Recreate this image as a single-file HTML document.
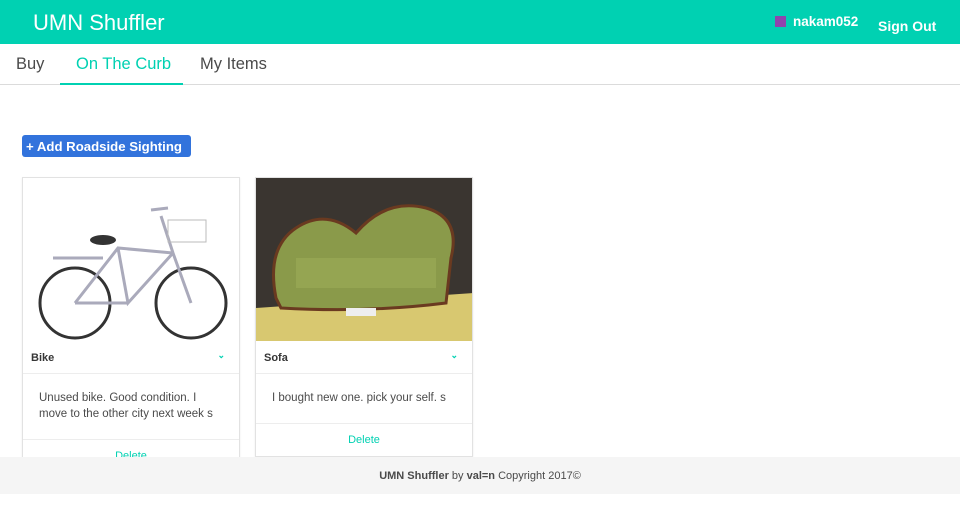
<!DOCTYPE html>
<html><head><meta charset="utf-8"><style>
*{box-sizing:border-box;margin:0;padding:0}
body{width:960px;height:518px;overflow:hidden;background:#fff;font-family:"Liberation Sans",sans-serif;color:#4a4a4a;position:relative}
.hdr{position:absolute;left:0;top:0;width:960px;height:44px;background:#00d1b2;color:#fff}
.logo{position:absolute;left:33px;top:10px;font-size:22px}
.user{position:absolute;left:775px;top:14px;font-size:13.5px;font-weight:bold}
.user i{display:inline-block;width:11px;height:11px;background:#8e44ad;margin-right:7px;vertical-align:-1px}
.so{position:absolute;left:878px;top:18px;font-size:14px;font-weight:bold}
.tabs{position:absolute;top:44px;left:0;width:960px;height:41px;border-bottom:1px solid #dbdbdb}
.tab{position:absolute;top:11px;font-size:16.5px;color:#4a4a4a}
.act{color:#00d1b2}
.ul{position:absolute;left:60px;top:83px;width:123px;height:2px;background:#00d1b2}
.btn{position:absolute;left:22px;top:135px;width:169px;height:22px;background:#3273dc;color:#fff;font-size:13.2px;font-weight:bold;border-radius:3px;padding:4px 0 0 4px;white-space:nowrap;overflow:hidden}
.card{position:absolute;top:177px;width:218px;background:#fff;border:1px solid #e2e2e2;box-shadow:0 1px 2px rgba(0,0,0,.08)}
.img{height:163px;overflow:hidden}
.ttl{height:33px;border-bottom:1px solid #ededed;font-size:11px;font-weight:bold;color:#363636;padding:11px 8px;position:relative}
.ttl span{position:absolute;right:14px;top:9px;color:#00d1b2;font-size:9px}
.desc{font-size:11.5px;line-height:16px;padding:16px 16px 17px;border-bottom:1px solid #ededed}
.del{text-align:center;color:#00d1b2;font-size:11px;padding:10px 0}
.foot{position:absolute;left:0;top:457px;width:960px;height:37px;background:#f5f5f5;text-align:center;font-size:11px;padding-top:13px;color:#4a4a4a}
</style></head><body>
<div class="hdr"><div class="logo">UMN Shuffler</div><div class="user"><i></i>nakam052</div><div class="so">Sign Out</div></div>
<div class="tabs"><div class="tab" style="left:16px">Buy</div><div class="tab act" style="left:76px">On The Curb</div><div class="tab" style="left:200px">My Items</div></div>
<div class="ul"></div>
<div class="btn">+ Add Roadside Sighting</div>
<div class="card" style="left:22px;height:290px">
<div class="img"><svg width="218" height="163"><rect width="218" height="163" fill="#fff"/><g fill="none" stroke="#333" stroke-width="3"><circle cx="52" cy="125" r="35"/><circle cx="168" cy="125" r="35"/></g><g fill="none" stroke="#aab" stroke-width="3"><path d="M52 125 L95 70 L150 75 L168 125 M95 70 L105 125 L150 75 M105 125 L52 125 M138 38 L150 75 M128 32 L145 30"/><path d="M30 80 L80 80"/></g><ellipse cx="80" cy="62" rx="13" ry="5" fill="#333"/><rect x="145" y="42" width="38" height="22" fill="none" stroke="#bbb"/></svg></div>
<div class="ttl">Bike<span>&#8964;</span></div>
<div class="desc" style="width:216px">Unused bike. Good condition. I<br>move to the other city next week s</div>
<div class="del">Delete</div></div>
<div class="card" style="left:255px;height:280px">
<div class="img"><svg width="218" height="163"><rect width="218" height="163" fill="#3a3530"/><polygon points="0,130 218,115 218,163 0,163" fill="#d8c870"/><path d="M20 120 Q10 70 40 50 Q70 30 100 55 Q130 20 170 30 Q205 40 195 80 L190 125 Q110 135 25 130 Z" fill="#8a9a4a" stroke="#6a3a20" stroke-width="3"/><rect x="40" y="80" width="140" height="30" fill="#95a552"/><rect x="90" y="130" width="30" height="8" fill="#eee"/></svg></div>
<div class="ttl">Sofa<span>&#8964;</span></div>
<div class="desc">I bought new one. pick your self. s</div>
<div class="del">Delete</div></div>
<div class="foot"><b>UMN Shuffler</b> by <b>val=n</b> Copyright 2017©</div>
</body></html>
